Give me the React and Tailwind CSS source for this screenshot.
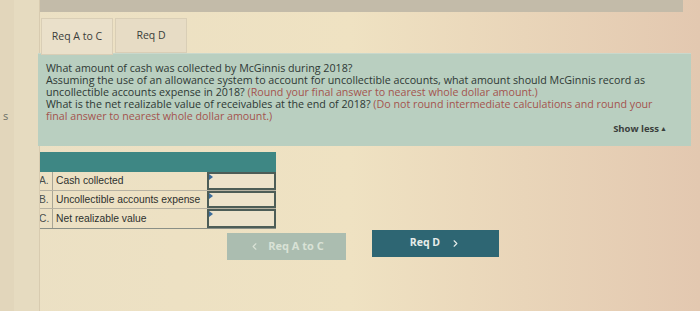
import { ChevronLeft, ChevronRight } from "lucide-react";

const rows = [
  { key: "A.", label: "Cash collected" },
  { key: "B.", label: "Uncollectible accounts expense" },
  { key: "C.", label: "Net realizable value" },
];

const App = () => {
  return (
    <div className="w-[700px] h-[311px] overflow-hidden flex bg-linear-to-r from-[#ebe0c4] via-[#efe2c2] to-[#e3c8b0] font-['Open_Sans',sans-serif]">
      {/* Left sidebar */}
      <div className="w-[40px] shrink-0 flex">
        <div className="w-[14px] bg-[#e2d6bb]" />
        <div className="flex-1 bg-[#e6dbc0] border-r border-[#d8cbb0] relative">
          <span className="absolute left-[-11px] top-[108px] text-[11px] text-[#6b6f66]">s</span>
        </div>
      </div>

      {/* Main */}
      <div className="flex-1 flex flex-col">
        <div className="h-[12px] mr-[17px] bg-[#c3bba9]" />

        {/* Tabs */}
        <div className="flex gap-[2px] mt-[6px] ml-[1px] relative z-10">
          <div className="w-[72px] h-[37px] bg-[#eae0ca] border border-[#d9ceb6] flex items-center justify-center text-[10.5px] text-[#3a3d3a]">
            Req A to C
          </div>
          <div className="w-[72px] h-[35px] bg-[#e7dcc5] border border-[#d9ceb6] flex items-center justify-center text-[10.5px] text-[#3a3d3a]">
            Req D
          </div>
        </div>

        {/* Question panel */}
        <div className="-mt-[2px] -ml-[2px] w-[653px] h-[93px] bg-[#b9cfc0] border-t border-[#c9d8cc] pl-[8px] pt-[8px] relative">
          <div className="text-[10.7px] leading-[12px] text-[#2e3834] whitespace-nowrap">
            <div>What amount of cash was collected by McGinnis during 2018?</div>
            <div>Assuming the use of an allowance system to account for uncollectible accounts, what amount should McGinnis record as</div>
            <div>
              uncollectible accounts expense in 2018?{" "}
              <span className="text-[#a4544e]">(Round your final answer to nearest whole dollar amount.)</span>
            </div>
            <div>
              What is the net realizable value of receivables at the end of 2018?{" "}
              <span className="text-[#a4544e]">(Do not round intermediate calculations and round your</span>
            </div>
            <div className="text-[#a4544e]">final answer to nearest whole dollar amount.)</div>
          </div>
          <div className="absolute right-[24px] bottom-[10px] text-[9.5px] font-bold text-[#3b403d] flex items-center gap-[1px]">
            Show less
            <span className="text-[7px]">▲</span>
          </div>
        </div>

        {/* Table */}
        <div className="mt-[6px] -ml-[4px] w-[240px] font-['Liberation_Sans',sans-serif]">
          <div className="h-[20px] bg-[#3e8784]" />
          <div className="border-l border-b border-[#8a8f86]">
            {rows.map((row) => (
              <div key={row.key} className="flex h-[18.5px] border-b border-[#b7b2a2] last:border-b-0">
                <div className="w-[16px] border-r border-[#a9a595] text-[10.3px] text-[#4a4f4c] pl-[2px] flex items-center">
                  {row.key}
                </div>
                <div className="w-[154px] text-[10.3px] text-[#2d302e] pl-[3px] flex items-center">
                  {row.label}
                </div>
                <div className="flex-1 border-2 border-[#4d5d57] bg-[#ede3cb] relative">
                  <span className="absolute left-0 top-0 w-0 h-0 border-t-[3px] border-b-[3px] border-l-[4px] border-t-transparent border-b-transparent border-l-[#3b6c9a]" />
                </div>
              </div>
            ))}
          </div>
        </div>

        {/* Nav buttons */}
        <div className="flex items-start ml-[187px] mt-[1px] gap-[26px]">
          <button className="mt-[3px] w-[119px] h-[27px] bg-[#abbdb0] text-[#d9e2d6] text-[11px] font-bold flex items-center justify-center gap-[8px]">
            <ChevronLeft className="w-[11px] h-[11px]" strokeWidth={2.5} />
            Req A to C
          </button>
          <button className="w-[127px] h-[27px] bg-[#2e6673] text-[#e6ecea] text-[10.5px] font-bold flex items-center justify-center gap-[10px]">
            Req D
            <ChevronRight className="w-[11px] h-[11px]" strokeWidth={2.5} />
          </button>
        </div>
      </div>
    </div>
  );
};

export default App;
